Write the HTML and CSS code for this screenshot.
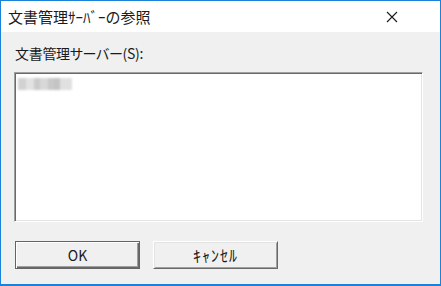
FILE: index.html
```html
<!DOCTYPE html>
<html lang="ja">
<head>
<meta charset="utf-8">
<link rel="stylesheet" href="styles.css">
</head>
<body>
<div class="window">
  <div class="titlebar">
    <span class="title">文書管理ｻｰﾊﾞｰの参照</span>
    <span class="close">
      <svg width="12" height="12" viewBox="0 0 12 12"><path d="M1 1 L11 11 M11 1 L1 11" stroke="#1a1a1a" stroke-width="1.1" fill="none"/></svg>
    </span>
  </div>
  <div class="content">
    <div class="label">文書管理サーバー(S):</div>
    <div class="listbox">
      <div class="item"><span class="blur"></span></div>
    </div>
    <div class="buttons">
      <button class="btn default">OK</button>
      <button class="btn cancel">ｷｬﾝｾﾙ</button>
    </div>
  </div>
</div>
</body>
</html>
```
FILE: styles.css
```css
* { box-sizing: border-box; }
html, body { margin: 0; padding: 0; }
body {
  width: 441px;
  height: 286px;
  font-family: "Noto Sans CJK JP", "Noto Sans", sans-serif;
  color: #1a1a1a;
  background: #f0f0f0;
}
.window {
  width: 441px;
  height: 286px;
  border: 1px solid #1a82d9;
  border-bottom-width: 2px;
  display: flex;
  flex-direction: column;
  background: #f0f0f0;
}
.titlebar {
  height: 31px;
  background: #fff;
  display: flex;
  align-items: center;
  justify-content: space-between;
  padding-left: 7px;
  padding-right: 42px;
}
.title {
  font-size: 15px;
  line-height: 18px;
  color: #1a1a1a;
}
.close {
  display: flex;
  width: 12px;
  height: 12px;
}
.content {
  flex: 1;
  padding: 12px 17px 0 13px;
  display: flex;
  flex-direction: column;
}
.label {
  font-size: 14px;
  line-height: 18px;
  height: 18px;
  font-feature-settings: "palt" 1;
  letter-spacing: -0.3px;
  margin-bottom: 10px;
  padding-left: 1px;
}
.listbox {
  height: 150px;
  background: #fff;
  border-top: 1px solid #a0a0a0;
  border-left: 1px solid #a0a0a0;
  border-right: 1px solid #fff;
  border-bottom: 1px solid #fff;
  box-shadow: inset 1px 1px 0 #696969, inset -1px -1px 0 #e3e3e3;
  padding: 5px 3px;
}
.item {
  height: 14px;
}
.blur {
  display: block;
  width: 54px;
  height: 12px;
  background:
    linear-gradient(90deg, #d2d2d2 0 8px, #e2e2e2 8px 16px, #cbcbcb 16px 22px, #d8d8d8 22px 30px, #c8c8c8 30px 36px, #c4c4c4 36px 42px, #e0e0e0 42px 54px);
  filter: blur(1.2px);
}
.buttons {
  display: flex;
  gap: 13px;
  margin-top: 19px;
  padding-left: 1px;
}
.btn {
  width: 125px;
  height: 28px;
  font-family: "Noto Sans CJK JP", "Noto Sans", sans-serif;
  font-size: 14px;
  line-height: 18px;
  color: #1a1a1a;
  background: #f0f0f0;
  padding: 0;
  margin: 0;
}
.default {
  border: 1px solid #646464;
  box-shadow: inset 1px 1px 0 #fff, inset -1px -1px 0 #696969, inset -2px -2px 0 #a0a0a0;
}
.cancel {
  border-top: 1px solid #fff;
  border-left: 1px solid #fff;
  border-right: 1px solid #696969;
  border-bottom: 1px solid #696969;
  box-shadow: inset 1px 1px 0 #e3e3e3, inset -1px -1px 0 #a0a0a0;
  font-size: 16px;
  letter-spacing: 1px;
  font-weight: 400;
}
```
